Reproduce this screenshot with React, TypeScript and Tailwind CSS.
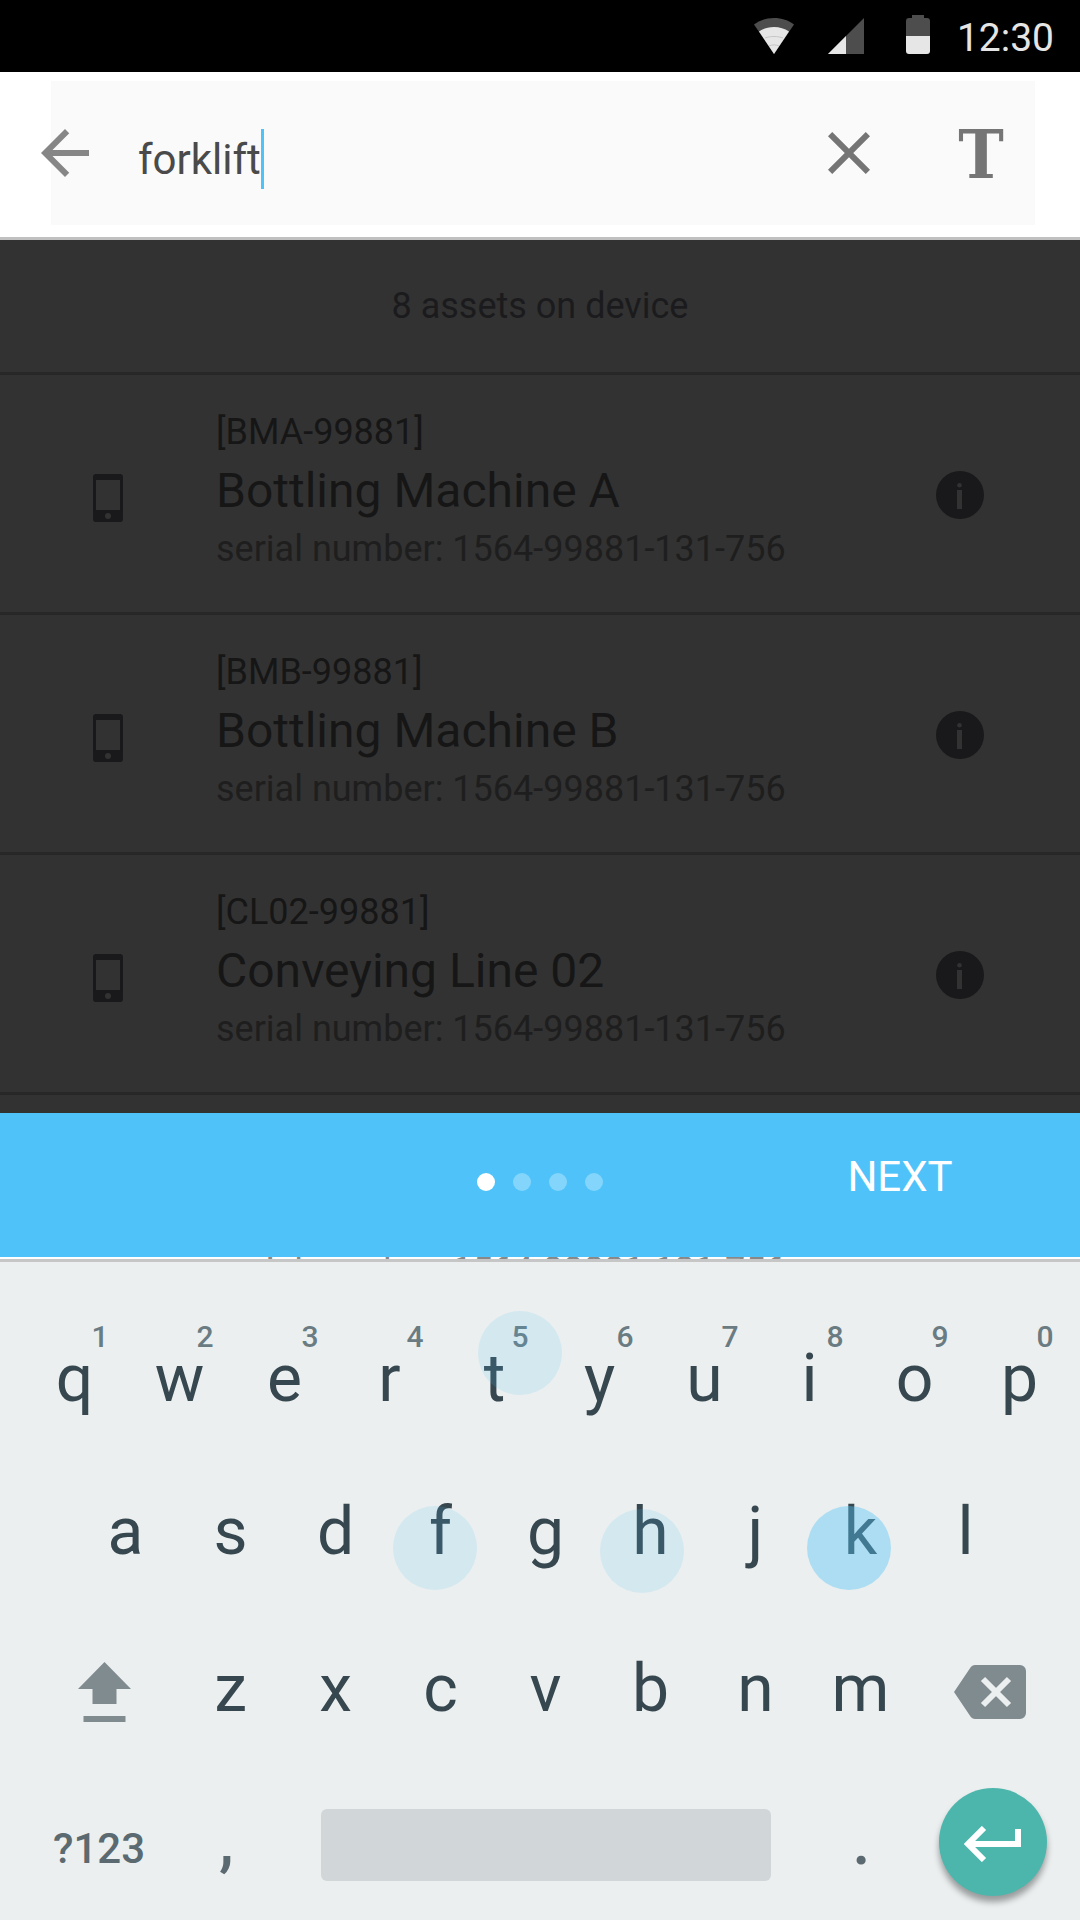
import React from "react";

const assets = [
  { id: "[BMA-99881]", name: "Bottling Machine A" },
  { id: "[BMB-99881]", name: "Bottling Machine B" },
  { id: "[CL02-99881]", name: "Conveying Line 02" },
];
const serial = "serial number: 1564-99881-131-756";

const topRow = [
  ["q", "1"],
  ["w", "2"],
  ["e", "3"],
  ["r", "4"],
  ["t", "5"],
  ["y", "6"],
  ["u", "7"],
  ["i", "8"],
  ["o", "9"],
  ["p", "0"],
];
const homeRow = ["a", "s", "d", "f", "g", "h", "j", "k", "l"];
const bottomRow = ["z", "x", "c", "v", "b", "n", "m"];

// Touch traces left on the keys, placed around each key's centre.
const touches: Record<string, string> = {
  t: "top-[9px] ml-[-17px] bg-[#4fc3f7]/15",
  f: "top-[51px] ml-[-48px] bg-[#4fc3f7]/15",
  h: "top-[54px] ml-[-51px] bg-[#4fc3f7]/15",
  k: "top-[51px] ml-[-54px] bg-[#4fc3f7]/40",
};

function StatusBar() {
  return (
    <header className="flex h-[72px] items-center justify-end bg-black pr-[26px] text-[#e5e5e5]">
      <svg className="mr-[34px] h-9 w-10" viewBox="0 0 40 36" aria-label="Wi-Fi">
        <path d="M0 6.500C5.500 2.300 12.300 0 20 0S34.500 2.300 40 6.500L20 36z" fill="#4d4d4d" />
        <path d="M5 13.500C9.500 10.500 14.300 9 20 9s10.500 1.500 15 4.500L20 36z" fill="#e6e6e6" />
        <path d="M11 20c5-2 13-2 18 0M15 28c3-1.500 7-1.500 10 0" fill="none" stroke="#b8b8b8" strokeWidth="0.700" />
      </svg>
      <svg className="mr-[42px] h-9 w-9" viewBox="0 0 36 36" aria-label="Signal">
        <path d="M36 0v36H0z" fill="#4d4d4d" />
        <path d="M18 18v18H0z" fill="#e6e6e6" />
      </svg>
      <svg className="mr-[27px] mb-[3px] h-[39px] w-6" viewBox="0 0 24 39" aria-label="Battery">
        <path d="M6 0h12v3h3a3 3 0 0 1 3 3v15H0V6a3 3 0 0 1 3-3h3z" fill="#4d4d4d" />
        <path d="M0 21h24v15a3 3 0 0 1-3 3H3a3 3 0 0 1-3-3z" fill="#e6e6e6" />
      </svg>
      <time className="pt-1 text-[39px] leading-none">12:30</time>
    </header>
  );
}

function SearchBar() {
  return (
    <form
      className="flex h-[168px] border-b-[3px] border-[#c0c0c0] bg-white pt-[9px] pr-[45px] pl-[51px]"
      onSubmit={(e) => e.preventDefault()}
    >
      <div className="flex h-36 flex-1 items-center bg-[#fafafa]">
        <button type="button" aria-label="Back" className="-ml-[22px] h-[72px] w-[72px]">
          <svg viewBox="0 0 24 24" fill="#868686">
            <path d="M20 11H7.830l5.590-5.590L12 4l-8 8 8 8 1.410-1.410L7.830 13H20v-2z" />
          </svg>
        </button>
        <label className="flex flex-1 items-center pt-3 pl-[37px]">
          <input
            aria-label="Search assets"
            defaultValue="forklift"
            className="field-sizing-content bg-transparent pt-[2px] text-[42px] leading-[60px] text-[#4a4a4a] caret-transparent outline-none"
          />
          <span className="h-[60px] w-[3px] bg-[#4fc3f7]" />
        </label>
        <button type="button" aria-label="Clear" className="mr-[60px] h-[72px] w-[72px]">
          <svg viewBox="0 0 24 24" fill="#757575">
            <path d="M19 6.410L17.590 5 12 10.590 6.410 5 5 6.410 10.590 12 5 17.590 6.410 19 12 13.410 17.590 19 19 17.590 13.410 12z" />
          </svg>
        </button>
        <button
          type="button"
          aria-label="Text format"
          className="mr-[18px] w-[72px] pt-[2px] font-['DejaVu_Serif_Condensed','DejaVu_Serif',serif] text-[68px] leading-[72px] font-bold text-[#757575]"
        >
          T
        </button>
      </div>
    </form>
  );
}

function AssetList() {
  return (
    <main className="bg-[#323232] pb-[18px] text-[36px] leading-[48px]">
      <h1 className="border-b-[3px] border-[#272727] py-[42px] text-center text-[#1b1b1d]">8 assets on device</h1>
      <ul>
        {assets.map((a) => (
          <li key={a.id} className="flex h-60 items-start border-b-[3px] border-[#272727] pt-[33px] pr-24 pl-[93px]">
            <svg className="mt-[66px] h-12 w-[30px]" viewBox="0 0 30 48" aria-hidden="true">
              <rect width="30" height="48" rx="3" fill="#19191b" />
              <path d="M3 6h24v30H3z" fill="#323232" />
              <circle cx="15" cy="42" r="3" fill="#323232" />
            </svg>
            <div className="flex-1 pl-[93px]">
              <p className="text-[#161616]">{a.id}</p>
              <h2 className="text-[48px] leading-[70px] text-[#161616]">{a.name}</h2>
              <p className="leading-[46px] text-[#1e1e1e]">{serial}</p>
            </div>
            <button type="button" aria-label={"Details of " + a.name} className="mt-[63px] h-12 w-12">
              <svg viewBox="0 0 48 48">
                <circle cx="24" cy="24" r="24" fill="#19191b" />
                <circle cx="23.500" cy="14.200" r="2.300" fill="#323232" />
                <path d="M21 19h5v19h-5z" fill="#323232" />
              </svg>
            </button>
          </li>
        ))}
      </ul>
    </main>
  );
}

function Banner() {
  return (
    <section className="grid h-36 grid-cols-3 items-center bg-[#4fc3f9] text-white">
      <div className="col-start-2 flex justify-center gap-[18px] pb-[6px]">
        <span className="h-[18px] w-[18px] rounded-full bg-white" />
        <span className="h-[18px] w-[18px] rounded-full bg-white/30" />
        <span className="h-[18px] w-[18px] rounded-full bg-white/30" />
        <span className="h-[18px] w-[18px] rounded-full bg-white/30" />
      </div>
      <button type="button" className="pb-4 text-[42px] leading-[48px]">
        NEXT
      </button>
    </section>
  );
}

function Key({ label, hint }: { label: string; hint?: string }) {
  return (
    <button type="button" className="relative flex items-center justify-center">
      {label}
      {hint && (
        <span className="absolute top-[17px] left-1/2 ml-[17px] text-[30px] leading-9 font-medium text-[#6a7b82]">
          {hint}
        </span>
      )}
      {touches[label] && <span className={"absolute left-1/2 h-[84px] w-[84px] rounded-full " + touches[label]} />}
    </button>
  );
}

function Keyboard() {
  return (
    <section
      aria-label="Keyboard"
      className="border-t-[3px] border-[#c6c6c6] bg-[#ebefef] pt-10 text-[66px] leading-[78px] text-[#37474f]"
    >
      <div className="grid h-[153px] grid-cols-10 pr-2 pl-[22px]">
        {topRow.map(([k, n]) => (
          <Key key={k} label={k} hint={n} />
        ))}
      </div>
      <div className="grid h-[153px] grid-cols-9 pr-[62px] pl-[73px]">
        {homeRow.map((k) => (
          <Key key={k} label={k} />
        ))}
      </div>
      <div className="grid h-[156px] grid-cols-[178fr_735fr_167fr]">
        <button type="button" aria-label="Shift" className="flex items-center justify-center pt-3 pl-[30px]">
          <svg className="h-[60px] w-[53px]" viewBox="0 0 53 60" fill="#808b90">
            <path d="M26.500 0L53 27H38.500v15h-24V27H0zM5.500 54h42v6h-42z" />
          </svg>
        </button>
        <div className="grid grid-cols-7 pt-[5px]">
          {bottomRow.map((k) => (
            <Key key={k} label={k} />
          ))}
        </div>
        <button type="button" aria-label="Backspace" className="flex items-center justify-center pt-3 pr-[14px]">
          <svg className="h-[54px] w-[72px]" viewBox="0 0 72 54">
            <path
              d="M21 0h45a6 6 0 0 1 6 6v42a6 6 0 0 1-6 6H21c-2 0-3.500-1-4.500-2.500L0 27 16.500 2.500C17.500 1 19 0 21 0z"
              fill="#808b90"
            />
            <path d="M29 14l26 26M55 14L29 40" stroke="#ebefef" strokeWidth="6" />
          </svg>
        </button>
      </div>
      <div className="grid h-[156px] grid-cols-[178fr_105fr_526fr_105fr_166fr] font-medium text-[#5b6970]">
        <button type="button" className="pt-[14px] pl-5 text-[42px]">
          ?123
        </button>
        <button type="button" className="pr-2">
          ,
        </button>
        <div className="flex items-center px-[38px] pt-[6px]">
          <button type="button" aria-label="Space" className="h-[72px] w-full rounded-md bg-[#d1d6d9]" />
        </div>
        <button type="button">.</button>
        <div className="flex items-center justify-center pr-2">
          <button
            type="button"
            aria-label="Enter"
            className="flex h-[108px] w-[108px] items-center justify-center rounded-full bg-[#4db6ac] pt-1 shadow-[0_6px_6px_rgba(0,0,0,0.35)]"
          >
            <svg className="h-9 w-[58px]" viewBox="0 0 58 36" fill="none" stroke="#fff" strokeWidth="6">
              <path d="M20 2L4 18l16 16M5 18h49V3" />
            </svg>
          </button>
        </div>
      </div>
    </section>
  );
}

export default function App() {
  return (
    <div className="flex min-h-screen flex-col bg-[#ebefef] font-['Roboto',sans-serif]">
      <StatusBar />
      <SearchBar />
      <AssetList />
      <Banner />
      <div className="h-[2px] overflow-hidden bg-white pl-[216px]">
        <p className="-mt-[11px] text-[36px] leading-[48px] text-[#888888]">{serial}</p>
      </div>
      <Keyboard />
    </div>
  );
}
